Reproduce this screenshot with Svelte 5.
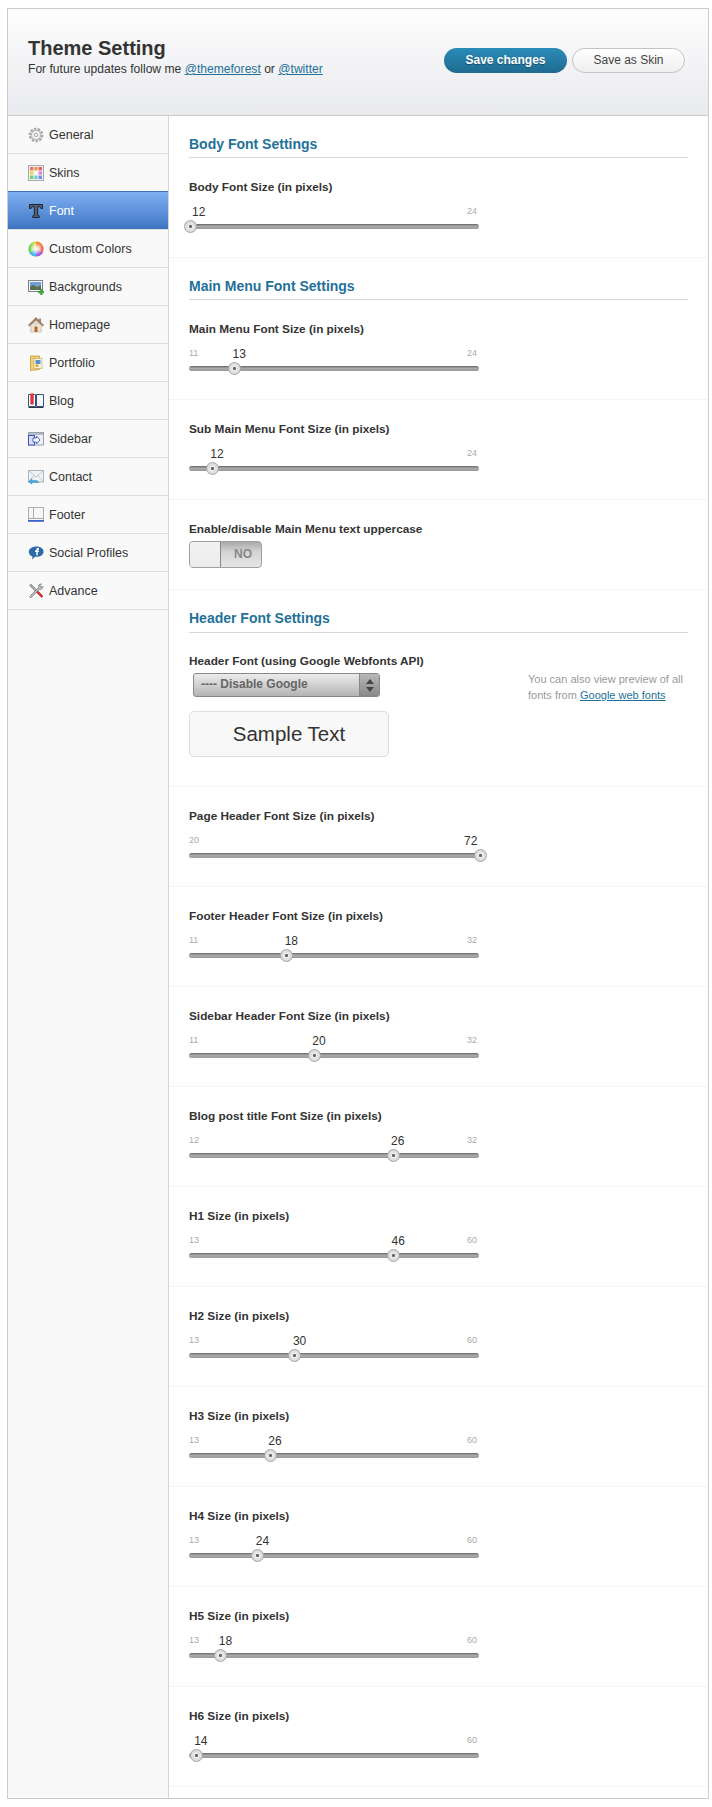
<script>
  const nav = ['General', 'Skins', 'Font', 'Custom Colors', 'Backgrounds', 'Homepage', 'Portfolio', 'Blog', 'Sidebar', 'Contact', 'Footer', 'Social Profiles', 'Advance'];

  const mainMenu = [
    { label: 'Main Menu Font Size (in pixels)', value: 13, min: 11, max: 24 },
    { label: 'Sub Main Menu Font Size (in pixels)', value: 12, min: 11, max: 24 }
  ];
  const headers = [
    { label: 'Page Header Font Size (in pixels)', value: 72, min: 20, max: 72 },
    { label: 'Footer Header Font Size (in pixels)', value: 18, min: 11, max: 32 },
    { label: 'Sidebar Header Font Size (in pixels)', value: 20, min: 11, max: 32 },
    { label: 'Blog post title Font Size (in pixels)', value: 26, min: 12, max: 32 },
    { label: 'H1 Size (in pixels)', value: 46, min: 13, max: 60 },
    { label: 'H2 Size (in pixels)', value: 30, min: 13, max: 60 },
    { label: 'H3 Size (in pixels)', value: 26, min: 13, max: 60 },
    { label: 'H4 Size (in pixels)', value: 24, min: 13, max: 60 },
    { label: 'H5 Size (in pixels)', value: 18, min: 13, max: 60 },
    { label: 'H6 Size (in pixels)', value: 14, min: 13, max: 60 }
  ];

  const TRACK = 290;
  const thumbAt = (s) => ((s.value - s.min) / (s.max - s.min)) * TRACK;
  // value label sits just right of the thumb, but stays inside the track
  const labelAt = (s) => Math.min(Math.max(thumbAt(s) - 1, 3), TRACK - 15);
  // the end labels get hidden when the value label runs over them
  const showMin = (s) => thumbAt(s) > 25;
  const showMax = (s) => thumbAt(s) < TRACK - 25;
</script>

{#snippet slider(s)}
  <div class="field">
    <div class="label">{s.label}</div>
    <div class="slider">
      {#if showMin(s)}<span class="min">{s.min}</span>{/if}
      {#if showMax(s)}<span class="max">{s.max}</span>{/if}
      <span class="value" style="left: {labelAt(s)}px">{s.value}</span>
      <div class="track"></div>
      <span class="thumb" style="left: {thumbAt(s) + 1}px"></span>
    </div>
  </div>
{/snippet}

{#snippet icon(name)}
  <svg class="icon" viewBox="0 0 16 16" width="16" height="16" aria-hidden="true">
    {#if name === 'General'}
      <circle cx="8" cy="8" r="5.9" fill="none" stroke="#a4a4a4" stroke-width="2.8" stroke-dasharray="2.300 1.300" />
      <circle cx="8" cy="8" r="4.600" fill="none" stroke="#c0c0c0" stroke-width="1.600" />
      <circle cx="8" cy="8" r="1.800" fill="#f0f0f0" stroke="#8c8c8c" stroke-width=".7" />
    {:else if name === 'Skins'}
      <rect x=".5" y=".5" width="15" height="15" fill="#f0f0f0" stroke="#aaa" />
      <rect x="2" y="2" width="3.4" height="3.4" fill="#e8766a" /><rect x="6.3" y="2" width="3.4" height="3.4" fill="#ef9a4a" /><rect x="10.6" y="2" width="3.4" height="3.4" fill="#e45f5f" />
      <rect x="2" y="6.3" width="3.4" height="3.4" fill="#e9d95a" /><rect x="6.3" y="6.3" width="3.4" height="3.4" fill="#f8f8f8" /><rect x="10.6" y="6.3" width="3.4" height="3.4" fill="#d98ad8" />
      <rect x="2" y="10.6" width="3.4" height="3.4" fill="#72cf72" /><rect x="6.3" y="10.6" width="3.4" height="3.4" fill="#6fd0d8" /><rect x="10.6" y="10.6" width="3.4" height="3.4" fill="#7a8fe8" />
    {:else if name === 'Font'}
      <path d="M1.500 1.500h13v4h-1.600l-1-1.800H9.700v8.600l1.500.6v1.600H4.800v-1.600l1.500-.6V3.700H4.100l-1 1.800H1.500z" fill="#56606e" stroke="#1f2530" stroke-width="1" />
    {:else if name === 'Custom Colors'}
      <defs>
        <linearGradient id="wheel-a" x1="0" y1="0" x2="1" y2="0"><stop offset="0" stop-color="#4fd04f" /><stop offset=".5" stop-color="#f0e050" /><stop offset="1" stop-color="#e84a6a" /></linearGradient>
        <radialGradient id="wheel-b"><stop offset="0" stop-color="#fff" /><stop offset=".5" stop-color="#fff" stop-opacity=".6" /><stop offset="1" stop-color="#fff" stop-opacity="0" /></radialGradient>
      </defs>
      <circle cx="8" cy="8" r="7.600" fill="url(#wheel-a)" />
      <path d="M8 8V.4A7.600 7.600 0 0 1 14.600 4.200z" fill="#f08a3c" />
      <path d="M8 8L1.400 11.800A7.600 7.600 0 0 0 8 15.600z" fill="#3fb8e8" />
      <path d="M8 8l6.600 3.800A7.600 7.600 0 0 1 8 15.600z" fill="#9a5ae0" />
      <circle cx="8" cy="8" r="6.200" fill="url(#wheel-b)" />
    {:else if name === 'Backgrounds'}
      <rect x=".5" y="1.500" width="14" height="11" fill="#f4f6f8" stroke="#7c8088" />
      <rect x="2" y="3" width="11" height="4" fill="#6f9fd4" />
      <path d="M2 7.500l3-1.500 4 1.500 4-1v4.500H2z" fill="#55704f" />
      <path d="M10.500 12.500h2v-2.200h1.600v2.200h1.900v1.600h-1.900V16h-1.600v-1.900h-2z" fill="#3db53d" stroke="#1f7f1f" stroke-width=".4" />
    {:else if name === 'Homepage'}
      <path d="M8 .6L.4 8.200l1 .8L8 3l6.600 6 1-.8z" fill="#a08268" stroke="#6b4a38" stroke-width=".5" />
      <rect x="11" y="1.500" width="2" height="4" fill="#a08268" />
      <path d="M2.800 8.500L8 3.500l5.200 5V15H2.800z" fill="#f0e4d4" stroke="#a89888" stroke-width=".5" />
      <rect x="6.500" y="9.500" width="3" height="5.500" fill="#b5662a" />
      <circle cx="8" cy="6.700" r="1" fill="#bcc8d0" />
    {:else if name === 'Portfolio'}
      <path d="M2.500 1h9v13.500l-9 1z" fill="#f3cf6e" stroke="#b8923a" stroke-width=".7" />
      <rect x="6" y="3.500" width="8" height="10" fill="#f8f3e2" stroke="#b8a670" stroke-width=".6" />
      <rect x="7.500" y="5" width="5" height="4" fill="#5b8fd0" />
      <rect x="7.500" y="9.500" width="3" height="2.500" fill="#d8b030" />
    {:else if name === 'Blog'}
      <path d="M.5 1.500h7v12h-7z" fill="#fff" stroke="#35507f" />
      <path d="M8.500 1.500h7v12h-7z" fill="#f5f8fb" stroke="#35507f" />
      <rect x="2.300" y=".5" width="3.400" height="11" fill="#e0323a" />
      <path d="M.5 14.500h15" stroke="#334" />
    {:else if name === 'Sidebar'}
      <rect x=".5" y="1.500" width="15" height="12.500" fill="#eef0f4" stroke="#9aa0ac" />
      <rect x="1" y="2" width="14" height="2" fill="#b8bcc6" />
      <rect x=".5" y="4.500" width="6" height="9.500" fill="#d8e0f6" stroke="#3a52b8" />
      <path d="M5 7h3.500V5.200L12 9l-3.500 3.800V11H5z" fill="#fff" stroke="#3a52b8" stroke-width=".9" />
    {:else if name === 'Contact'}
      <rect x=".5" y="1.500" width="15" height="11.500" fill="#eef2f5" stroke="#aab4bc" />
      <path d="M.5 1.500L8 8l7.500-6.500M.5 13L6 6.500M15.500 13L10 6.500" fill="none" stroke="#b4bec6" stroke-width=".8" />
      <path d="M9 11.500H4V9.800L.5 12.500 4 15.200v-1.700h7z" fill="#4aa8dc" stroke="#2c86bc" stroke-width=".4" />
    {:else if name === 'Footer'}
      <rect x=".5" y=".5" width="15" height="14" fill="#f6f6f4" stroke="#b0b0b0" />
      <path d="M5.500 1v10" stroke="#b0b0b0" />
      <path d="M1 11.500h14" stroke="#a8a8a8" />
      <rect x="0" y="13" width="16" height="1.600" fill="#4060d8" />
    {:else if name === 'Social Profiles'}
      <path d="M8.500 1.500c4 0 7 2.200 7 5.200s-3 5.100-7 5.100H7L4 14.500l.5-3C2.200 10.700.8 9 .8 6.700c0-3 3.400-5.200 7.700-5.200z" fill="#2f6aa8" />
      <path d="M8.300 10.300V7H7V5.600h1.300V4.700c0-1.100.7-1.700 1.700-1.700h1v1.400h-.7c-.4 0-.5.200-.5.500v.7H11L10.800 7h-1v3.300z" fill="#fff" />
    {:else}
      <path d="M1.500 2.500L3 1l5.500 5.500-1.500 1.500z" fill="#aaa" stroke="#666" stroke-width=".5" />
      <path d="M8 9l5.500 5.500 1.500-1.500-5.500-5.500z" fill="#d83030" stroke="#992222" stroke-width=".5" />
      <path d="M1.500 13.500L10.500 4.500c-.4-1.700.8-3.500 3-3.700l-1.500 2 1 1.500 2-1c0 2.200-2 3.800-3.800 3.200L2.800 15z" fill="#bcbcbc" stroke="#666" stroke-width=".6" />
    {/if}
  </svg>
{/snippet}

<div class="page">
  <header class="top">
    <div class="intro">
      <h1>Theme Setting</h1>
      <p>For future updates follow me <a href="#tf">@themeforest</a> or <a href="#tw">@twitter</a></p>
    </div>
    <div class="actions">
      <button class="primary">Save changes</button>
      <button class="plain">Save as Skin</button>
    </div>
  </header>

  <div class="body">
    <nav class="side">
      {#each nav as item}
        <a class="item" class:active={item === 'Font'} href="#{item}">
          {@render icon(item)}
          <span>{item}</span>
        </a>
      {/each}
    </nav>

    <main class="content">
      <section>
        <h2>Body Font Settings</h2>
        {@render slider({ label: 'Body Font Size (in pixels)', value: 12, min: 12, max: 24 })}
      </section>

      <section>
        <h2>Main Menu Font Settings</h2>
        {#each mainMenu as s}
          {@render slider(s)}
        {/each}
        <div class="field toggle-field">
          <div class="label">Enable/disable Main Menu text uppercase</div>
          <div class="toggle"><span class="knob"></span><span class="off">NO</span></div>
        </div>
      </section>

      <section>
        <h2 class="tall">Header Font Settings</h2>
        <div class="field font-field">
          <div class="font-left">
            <div class="label">Header Font (using Google Webfonts API)</div>
            <div class="select">
              <span class="select-text">---- Disable Google</span>
              <span class="select-arrows"><i class="up"></i><i class="down"></i></span>
            </div>
            <div class="sample">Sample Text</div>
          </div>
          <p class="note">You can also view preview of all fonts from <a href="#gwf">Google web fonts</a></p>
        </div>
        {#each headers as s}
          {@render slider(s)}
        {/each}
      </section>
    </main>
  </div>
</div>

<style>
  :global(body) { margin: 0; background: #fff; }
  .page { width: 700px; margin: 8px 3px 8px 7px; border: 1px solid #ccc; font-family: "Liberation Sans", Arial, sans-serif; color: #333; }

  .top { display: flex; align-items: center; justify-content: space-between; height: 106px; padding: 0 23px 0 20px; border-bottom: 1px solid #ccc; background: linear-gradient(#fdfdfd, #e9eaee); }
  .intro { padding-bottom: 11px; }
  .top h1 { margin: 0; font-size: 20px; line-height: 24px; font-weight: 700; color: #333; }
  .top p { margin: 1px 0 0; font-size: 12.1px; line-height: 16px; color: #333; }
  .top a { color: #1f7199; }
  .actions { display: flex; gap: 5px; padding-bottom: 4px; }
  button { height: 25px; border-radius: 13px; font: 12px "Liberation Sans", Arial, sans-serif; padding: 0; }
  .primary { width: 123px; border: 0; background: linear-gradient(#2a8cb9, #1f6a90); color: #fff; font-weight: 700; text-shadow: 0 1px 1px rgba(0, 0, 0, .35); }
  .plain { width: 113px; border: 1px solid #c4c4c4; background: linear-gradient(#fff, #eee); color: #444; }

  .body { display: flex; }
  .side { width: 160px; flex: none; background: #f9f9f9; border-right: 1px solid #d6d6d6; }
  .item { display: flex; align-items: center; gap: 5px; height: 37px; padding-left: 20px; border-bottom: 1px solid #dedede; font-size: 12.5px; color: #333; text-decoration: none; }
  .item.active { margin-top: -1px; border-top: 1px solid #3d6fb8; background: linear-gradient(#80b0f4, #3e75c2); color: #fff; }
  .icon { flex: none; }

  .content { flex: 1; min-width: 0; padding-bottom: 11px; background: #fff; }
  h2 { margin: 0 20px; height: 33px; padding-top: 8px; border-bottom: 1px solid #d8d8d8; font-size: 14px; line-height: 40px; color: #1f7199; font-weight: 700; }
  h2.tall { height: 34px; }

  .field { box-sizing: border-box; height: 100px; padding: 21px 20px 0; border-bottom: 1px solid #f5f5f5; }
  .label { font-size: 11.8px; line-height: 16px; font-weight: 700; color: #333; }

  .slider { position: relative; width: 290px; height: 36px; margin-top: 3px; }
  .min, .max { position: absolute; top: 7px; font-size: 9px; line-height: 12px; color: #aaa; }
  .min { left: 0; }
  .max { right: 2px; }
  .value { position: absolute; top: 7px; font-size: 12px; line-height: 14px; color: #333; }
  .track { position: absolute; top: 26px; left: 0; right: 0; height: 5px; border-radius: 3px; background: linear-gradient(#666, #aaa 45%, #999); }
  .thumb { position: absolute; top: 22px; width: 13px; height: 13px; margin-left: -6.5px; border: 1px solid #a8a8a8; border-radius: 50%; box-sizing: border-box; background: radial-gradient(circle, #666 0, #666 1.2px, #ececec 2px, #c8c8c8 100%); }

  .toggle-field { height: 90px; }
  .toggle { display: flex; width: 73px; height: 27px; margin-top: 4px; box-sizing: border-box; border: 1px solid #a0a0a0; border-radius: 4px; overflow: hidden; background: linear-gradient(#aaa, #d4d4d4 40%, #e6e6e6); }
  .knob { width: 30px; border-right: 1px solid #888; background: linear-gradient(#f2f2f2, #ececec); }
  .off { flex: 1; text-align: center; padding-left: 4px; font-size: 12px; line-height: 25px; font-weight: 700; color: #888; }

  .font-field { display: flex; height: 154px; padding-top: 20px; }
  .font-left { width: 339px; flex: none; }
  .select { display: flex; width: 187px; height: 24px; margin: 4px 0 0 4px; box-sizing: border-box; border: 1px solid #888; border-radius: 3px; background: linear-gradient(#ececec, #b4b4b4); overflow: hidden; }
  .select-text { flex: 1; padding-left: 7px; font-size: 12px; line-height: 21px; font-weight: 700; color: #666; }
  .select-arrows { display: flex; flex-direction: column; align-items: center; justify-content: center; gap: 3px; width: 19px; border-left: 1px solid #888; background: linear-gradient(#b8b8b8, #888); }
  .select-arrows i { width: 0; height: 0; border-left: 4px solid transparent; border-right: 4px solid transparent; }
  .up { border-bottom: 5px solid #444; }
  .down { border-top: 5px solid #444; }
  .sample { box-sizing: border-box; width: 200px; height: 46px; margin-top: 14px; border: 1px solid #ddd; border-radius: 5px; background: #f8f8f8; text-align: center; font-size: 20.5px; line-height: 44px; color: #333; }
  .note { width: 165px; margin: 18px 0 0; font-size: 11px; line-height: 16px; color: #999; }
  .note a { color: #1f7199; }
</style>
